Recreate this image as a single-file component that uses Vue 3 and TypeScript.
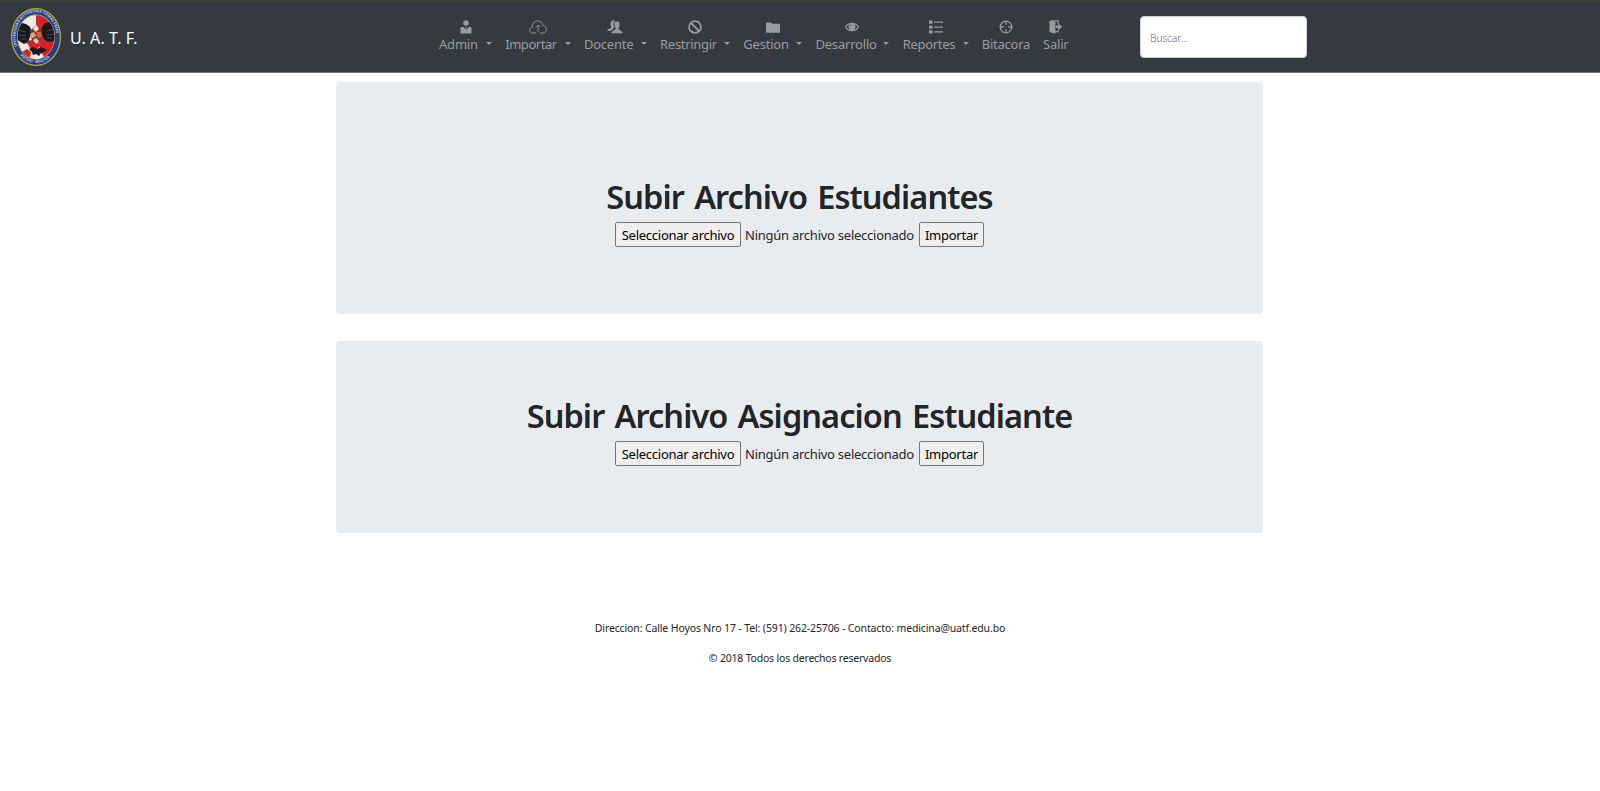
<script setup lang="ts">
interface NavItem {
  label: string
  icon: string
  width: number
  spacing: number
  menu: boolean
}

const navItems: NavItem[] = [
  { label: 'Admin', icon: 'user', width: 53, spacing: -0.2, menu: true },
  { label: 'Importar', icon: 'cloud', width: 65.5, spacing: -0.45, menu: true },
  { label: 'Docente', icon: 'users', width: 63, spacing: -0.2, menu: true },
  { label: 'Restringir', icon: 'ban', width: 70, spacing: -0.3, menu: true },
  { label: 'Gestion', icon: 'folder', width: 59, spacing: -0.2, menu: true },
  { label: 'Desarrollo', icon: 'eye', width: 74, spacing: -0.2, menu: true },
  { label: 'Reportes', icon: 'list', width: 66, spacing: -0.3, menu: true },
  { label: 'Bitacora', icon: 'target', width: 48, spacing: -0.25, menu: false },
  { label: 'Salir', icon: 'exit', width: 26, spacing: -0.2, menu: false },
]

const panels = [
  { title: 'Subir Archivo Estudiantes', size: 'tall' },
  { title: 'Subir Archivo Asignacion Estudiante', size: 'short' },
]
</script>

<template>
  <div class="page">
    <header class="navbar">
      <a class="brand">
        <svg class="logo" viewBox="0 0 52 60">
          <defs>
            <clipPath id="shield"><ellipse cx="26" cy="30" rx="18.4" ry="22" /></clipPath>
            <path id="arc-top" d="M7.2 39 A20.4 24.3 0 1 1 44.8 39" />
            <path id="arc-bottom" d="M9 47 A22.8 26.7 0 0 0 43 47" />
          </defs>
          <ellipse cx="26" cy="30" rx="24.4" ry="28.4" fill="#263c93" stroke="#b9ad23" stroke-width="1.3" />
          <ellipse cx="26" cy="30" rx="18.6" ry="22.2" fill="#ebe8e6" stroke="#b9ad23" stroke-width="1" />
          <g clip-path="url(#shield)">
            <path d="M26 6H48V55H34L30 40L26 30Z" fill="#d4222a" />
            <path d="M16 34L22 33L31 38L27 42L20 41Z" fill="#d4222a" />
            <path d="M12 45L17 42L21 45L20 50H15Z" fill="#d4222a" />
            <path d="M7 19L12 16L16 17L20 20L22 25L20 30L18 35L14 37L9 34L6 31Z" fill="#17191c" />
            <path d="M46 18L40 15L35 16L32 20L31 25L34 32L38 35L45 34Z" fill="#17191c" />
            <path d="M19 42L23 40L27 42L31 40L37 43L34 45L31 46L29 49L26 47L23 48L22 45Z" fill="#17191c" />
            <path d="M22 50L26 48L29 50L33 47L34 51L30 54H24Z" fill="#efeeee" />
            <path d="M8 23L16 25M8 28L16 29M11 32L17 32M44 22L37 24M44 27L37 28M42 31L37 31" stroke="#565c61" stroke-width=".8" />
          </g>
          <path d="M20 24L26 18L32 24L32 31L28 35L22 34Z" fill="#8f3527" />
          <path d="M23 22L26 17.5L29 22L26 25Z" fill="#eee3d2" />
          <path d="M20 27L24 25L26 29L22 31Z" fill="#cdb58f" />
          <path d="M26 25L31 25L32 30L28 31Z" fill="#c96744" />
          <path d="M23 33L26 31L29 34L26 37Z" fill="#d8cdb9" />
          <text class="seal-text"><textPath href="#arc-top">UNIVERSIDAD AUTONOMA TOMAS FRIAS</textPath></text>
          <text class="seal-text"><textPath href="#arc-bottom" startOffset="2">POTOSI - BOLIVIA</textPath></text>
        </svg>
        <span class="brand-name">U. A. T. F.</span>
      </a>

      <nav class="menu">
        <a v-for="item in navItems" :key="item.label" class="menu-item" :style="{ width: item.width + 'px' }">
          <svg class="icon" viewBox="0 0 18 14">
            <g v-if="item.icon === 'user'" fill="currentColor">
              <circle cx="9" cy="2.9" r="2.7" />
              <path d="M3.5 13.5V8.2Q3.5 7 5 7H6.3L8.4 9.8L8.6 6.3H9.4L9.6 9.8L11.7 7H13Q14.5 7 14.5 8.2V13.5Z" />
            </g>
            <g v-else-if="item.icon === 'cloud'" fill="none" stroke="currentColor" stroke-width=".9">
              <path d="M7 13H3.8C-.1 13-.4 7.6 3.3 7.2C3.3-.7 12.5-.9 13.6 5.2C18.7 5.7 18.2 13 14 13H11" />
              <path d="M9 12V5.2M6.6 7.5L9 5.1L11.4 7.5" />
            </g>
            <g v-else-if="item.icon === 'users'" fill="currentColor">
              <path d="M5.2 1.4C6.2.1 8 .1 9 1C7.3 2 7.2 4.8 8.1 7L7.3 8.7L4.5 11H1.5V9.8L4.8 8.1C5.6 7.6 5.2 6.8 4.8 5.8C4.3 4.5 4.3 2.5 5.2 1.4Z" />
              <path d="M11 1.3C13.5 1.3 14.3 3.4 13.7 5.7C13.2 7.5 12.4 8.2 12.6 9C13 10 16.7 10.6 16.9 12.8V13.5H5.2V12.8C5.4 10.6 9.1 10 9.5 9C9.7 8.2 8.8 7.5 8.3 5.7C7.7 3.4 8.5 1.3 11 1.3Z" stroke="#343a40" stroke-width=".4" />
            </g>
            <g v-else-if="item.icon === 'ban'" fill="none" stroke="currentColor" stroke-width="1.8">
              <circle cx="9" cy="7" r="5.9" />
              <path d="M4.9 2.9L13.1 11.1" />
            </g>
            <path v-else-if="item.icon === 'folder'" fill="currentColor" d="M2 12.7V2.4H7.2L8.2 3.8H16V12.7Z" />
            <g v-else-if="item.icon === 'eye'">
              <path d="M2.6 7C5 2.2 13 2.2 15.4 7C13 11.8 5 11.8 2.6 7Z" fill="none" stroke="currentColor" stroke-width="1.3" />
              <circle cx="9" cy="6.7" r="3.5" fill="currentColor" />
              <path d="M8.8 4.8Q7.4 5 7.2 6.6" fill="none" stroke="#343a40" stroke-width=".9" />
            </g>
            <path v-else-if="item.icon === 'list'" fill="currentColor" d="M2 .5H5.5V3.8H2ZM2 5.4H5.5V8.7H2ZM2 10.2H5.5V13.5H2ZM7.2 1.5H16V2.8H7.2ZM7.2 6.4H16V7.7H7.2ZM7.2 11.2H16V12.5H7.2Z" />
            <g v-else-if="item.icon === 'target'" fill="none" stroke="currentColor" stroke-width="1.3">
              <circle cx="9" cy="7" r="5.8" />
              <path d="M9 1V4.7M9 9.3V13M3 7H6.7M11.3 7H15" />
            </g>
            <g v-else>
              <path d="M2.5.5L8.4 1.8V13.7L2.5 12Z" fill="currentColor" />
              <path d="M4 .9H11.2V4M11.2 9.5V11.7H8" fill="none" stroke="currentColor" stroke-width="1.2" />
              <path d="M8.9 5.6H11.3V3.2L15.3 6.8L11.3 10.3V8H8.9Z" fill="currentColor" />
            </g>
          </svg>
          <span class="menu-row">
            <span class="menu-label" :style="{ letterSpacing: item.spacing + 'px' }">{{ item.label }}</span>
            <i v-if="item.menu" class="caret"></i>
          </span>
        </a>
      </nav>

      <input class="search" type="text" placeholder="Buscar..." />
    </header>

    <main class="content">
      <section v-for="panel in panels" :key="panel.title" class="panel" :class="panel.size">
        <h1>{{ panel.title }}</h1>
        <div class="upload">
          <button class="pick" type="button">Seleccionar archivo</button>
          <span class="status">Ningún archivo seleccionado</span>
          <button class="send" type="button">Importar</button>
        </div>
      </section>
    </main>

    <footer class="footer">
      <p class="address">Direccion: Calle Hoyos Nro 17 - Tel: (591) 262-25706 - Contacto: medicina@uatf.edu.bo</p>
      <p class="rights">© 2018 Todos los derechos reservados</p>
    </footer>
  </div>
</template>

<style>
body {
  margin: 0;
  background: #fff;
}
</style>

<style scoped>
.page {
  height: 791px;
  overflow: hidden;
  font-family: "Noto Sans", "Open Sans", sans-serif;
  color: #212529;
}
.navbar {
  box-sizing: border-box;
  display: flex;
  align-items: flex-start;
  height: 73px;
  border-top: 2px solid #3d403d;
  border-bottom: 1px solid #75797b;
  background: #343a40;
}
.brand {
  display: flex;
  align-items: center;
  width: 439px;
  padding-top: 5px;
  color: #fff;
}
.logo {
  width: 52px;
  height: 60px;
  margin-left: 10px;
  overflow: visible;
}
.seal-text {
  fill: #c5cbe6;
  font-size: 3.8px;
  font-weight: 700;
}
.brand-name {
  margin-left: 8px;
  font-size: 16px;
  letter-spacing: 0.1px;
  line-height: 24px;
  padding-top: 1px;
  white-space: nowrap;
}
.menu {
  display: flex;
  gap: 13.2px;
  width: 701px;
  padding-top: 18px;
  color: #999c9f;
}
.menu-item {
  flex: none;
  display: flex;
  flex-direction: column;
  align-items: center;
}
.icon {
  width: 18px;
  height: 14px;
  overflow: visible;
}
.menu-row {
  display: flex;
  align-items: center;
  justify-content: space-between;
  width: 100%;
  height: 20px;
  font-size: 13px;
  line-height: 20px;
  white-space: nowrap;
}
.caret {
  margin-top: -1px;
  border-top: 3.5px solid currentColor;
  border-left: 3.5px solid transparent;
  border-right: 3.5px solid transparent;
}
.search {
  box-sizing: border-box;
  width: 167px;
  height: 42px;
  margin-top: 14px;
  padding: 1px 9px 0;
  border: 1px solid #ced4da;
  border-radius: 4px;
  background: #fff;
  font-family: "Open Sans", sans-serif;
  font-size: 10.5px;
  font-weight: 300;
  letter-spacing: -0.2px;
}
.search::placeholder {
  color: #59626b;
  opacity: 1;
}
.content {
  display: flex;
  flex-direction: column;
  gap: 27px;
  width: 927px;
  margin: 9px 0 0 336px;
}
.panel {
  box-sizing: border-box;
  display: flex;
  flex-direction: column;
  align-items: center;
  border-radius: 4px;
  background: #e9ecef;
}
.tall {
  height: 232px;
  padding-top: 95px;
}
.short {
  height: 192px;
  padding-top: 55px;
}
h1 {
  margin: 0;
  font-size: 32.5px;
  font-weight: 600;
  letter-spacing: -0.93px;
  word-spacing: 2.7px;
  line-height: 40px;
  white-space: nowrap;
}
.upload {
  display: flex;
  align-items: center;
  height: 25px;
  margin-top: 5px;
  font-size: 13px;
  letter-spacing: -0.25px;
  white-space: nowrap;
}
button {
  box-sizing: border-box;
  height: 25px;
  padding: 0;
  border: 1px solid #767676;
  border-radius: 2px;
  background: #efefef;
  color: #000;
  font: inherit;
  letter-spacing: inherit;
}
.pick {
  width: 126px;
}
.status {
  width: 170px;
  margin: 0 4px;
}
.send {
  width: 65px;
}
.footer {
  padding-top: 87px;
  font-size: 10.5px;
  text-align: center;
}
.footer p {
  margin: 0 0 14px;
  line-height: 16px;
}
.address {
  letter-spacing: -0.13px;
}
.rights {
  letter-spacing: -0.2px;
}
</style>
